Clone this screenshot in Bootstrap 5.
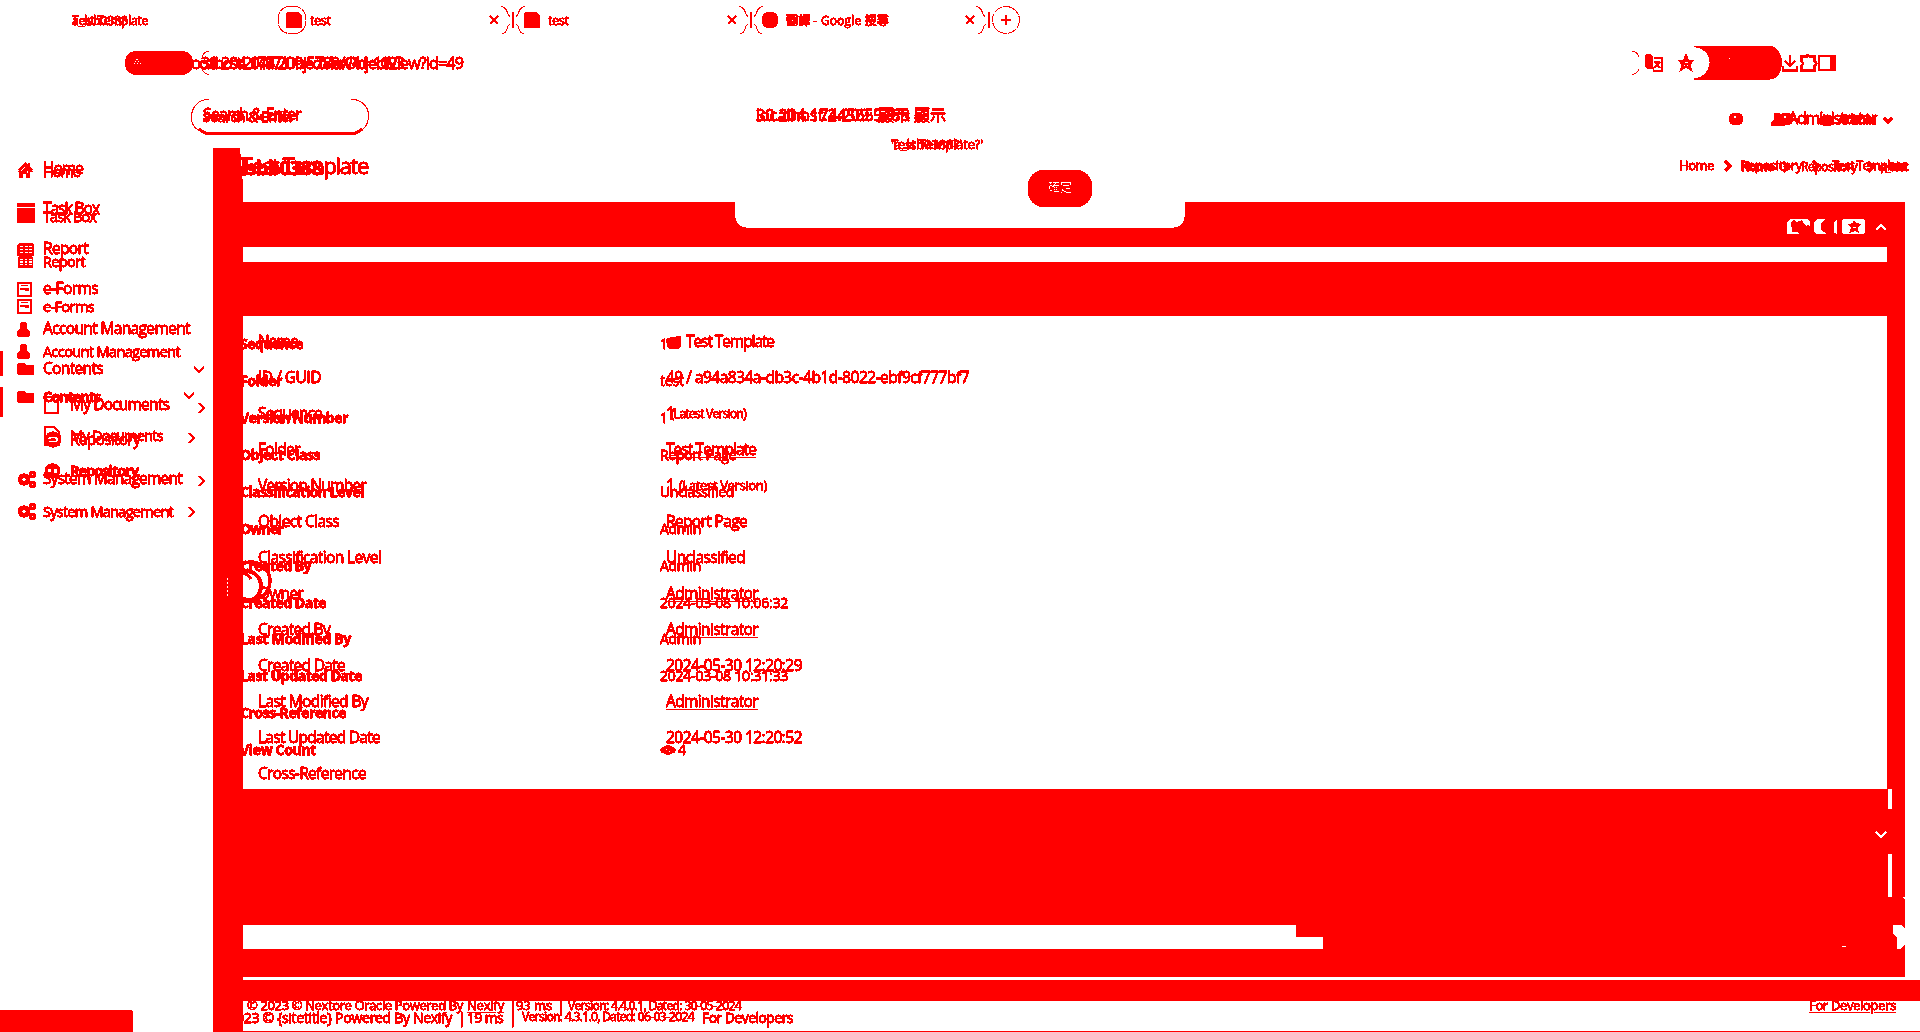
<!DOCTYPE html>
<html lang="zh-Hant">
<head>
<meta charset="utf-8">
<title>Test Template</title>
<link rel="stylesheet" href="https://cdn.jsdelivr.net/npm/bootstrap@5.3.0/dist/css/bootstrap.min.css">
<style>
:root{--ink:#f00}
body{font-family:"Open Sans","Noto Sans CJK TC",sans-serif;color:var(--ink);background:#fff;overflow:hidden}
.screen{width:1920px;height:1032px;filter:url(#crisp);background:#fff;overflow:hidden;-webkit-text-stroke:.3px var(--ink)}
.screen *{white-space:nowrap}
svg{display:block;flex:none;fill:none;stroke:var(--ink);stroke-width:2;shape-rendering:crispEdges}
.solid{fill:var(--ink);stroke:none}
.ink{background:var(--ink)}
.over{position:absolute;left:0;top:0}
.at{position:absolute;line-height:20px}
.tabs-row{height:40px}.url-row{height:48px}.app-row{height:60px}
.t12{font-size:12px}.t13{font-size:13px}.t14{font-size:14px}.t15{font-size:15px}.t16{font-size:16px}
.side{width:213px;height:884px}
.side ul{width:213px}
.lay-a{position:relative;top:1px}
.lay-a li{height:40px;font-size:15.5px}.lay-a li.sub{height:35px;top:-2px}
.lay-b li{height:45px;font-size:14.5px}.lay-b li.sub{height:35px;top:-1px}
.side li{padding-left:17px;position:relative}
.side li.sub{padding-left:44px}
.side .glyph{width:26px}.side .sub .glyph{width:26px}
.side .chev{position:absolute;right:8px}.lay-b .chev{right:18px!important}
.side .cur::before{content:"";position:absolute;left:0;top:2px;width:3px;height:25px;background:var(--ink)}
.lay-b .cur::before{top:13px!important;height:30px!important}
.rail{width:30px;height:884px}
.main-col{width:1677px}
.head{height:54px}
.panel-box{width:1662px}
.rows-a{padding:8px 0 0 15px}.rows-a>div{height:36px;font-size:15.5px}
.rows-a .k{width:408px}
.rows-b{top:9px;left:-3px}.rows-b>div{height:36.95px;font-size:14px}
.rows-b .k{width:420px;font-weight:700}
.sheet{width:1644px;height:473px}
u{text-underline-offset:2px}
</style>
</head>
<body>
<svg width="0" height="0" class="position-absolute"><defs>
<filter id="crisp" x="0" y="0" width="100%" height="100%" color-interpolation-filters="sRGB"><feComponentTransfer><feFuncR type="discrete" tableValues="1 1"/><feFuncG type="discrete" tableValues="0 0 0 0 0 0 0 1"/><feFuncB type="discrete" tableValues="0 0 0 0 0 0 0 1"/></feComponentTransfer></filter>
<symbol id="home" viewBox="0 0 16 16"><path class="solid" d="M8 0L0 8h2v7h4v-4h3v4h4V8h3l-3-3V1h-2v2z"/><path d="M4 7l4-4M11 7v3" stroke="#fff" stroke-width="1"/></symbol>
<symbol id="grid" viewBox="0 0 17 13"><path class="solid" d="M2 0h13l2 2v11H0V2z"/><path d="M3 3.500h12M3 6.500h12M3 9.500h12" stroke="#fff" stroke-width="1.200" stroke-dasharray="3 1.500"/></symbol>
<symbol id="form" viewBox="0 0 15 15"><path d="M1 1h13v13H1zM3 7h9M8 8h4" stroke-width="2.600"/><path d="M4 3.500h7" stroke-width="1"/></symbol>
<symbol id="user" viewBox="0 0 13 15"><path class="solid" d="M6.500 0C3 0 2 3 3 6L0 10v4l2 1h9l2-1v-4l-3-4c1-3 0-6-3.500-6z"/></symbol>
<symbol id="folder" viewBox="0 0 17 12"><path class="solid" d="M1 0h6l2 2h7l1 1v8l-1 1H1l-1-1V1z"/></symbol>
<symbol id="gears" viewBox="0 0 19 17"><circle cx="7" cy="8.500" r="4" stroke-width="4.500"/><path d="M7 2v13M.5 8.500H13M2.500 4l9 9M2.500 13l9-9" stroke-dasharray="2.500 8 2.500 9"/><circle cx="15.500" cy="3.500" r="2" stroke-width="3.500"/><circle cx="15.500" cy="13.500" r="2" stroke-width="3.500"/></symbol>
<symbol id="world" viewBox="0 0 18 17"><circle cx="9" cy="8.500" r="6.500" stroke-width="3.500"/><path d="M1 5h16M2 12h14M9 2v4M9 11v4" stroke-width="1.800"/><circle cx="9" cy="8.500" r="2" class="solid"/></symbol>
<symbol id="down" viewBox="0 0 12 7"><path d="M1 1l5 4.500L11 1" stroke-width="2.200"/></symbol>
<symbol id="next" viewBox="0 0 7 12"><path d="M1 1l4.500 5L1 11" stroke-width="2.200"/></symbol>
<symbol id="bc" viewBox="0 0 8 12"><path d="M1 1l5 5-5 5" stroke-width="3"/></symbol>
</defs></svg>
<div class="screen position-relative">

<header class="tabs-row position-relative">
 <svg class="over" width="1030" height="40" style="stroke-width:1">
  <rect x="278.500" y="6.500" width="27" height="27" rx="11" stroke-dasharray="12 1"/>
  <path d="M501 6.500q5 1 6 5t3 5M510 24q-2 1-3 5t-5 4.500M525 6.500q-5 1-6 5t-3 5M516 24q2 1 3 5t5 4.500M739 6.500q5 1 6 5t3 5M748 24q-2 1-3 5t-5 4.500M763 6.500q-5 1-6 5t-3 5M754 24q2 1 3 5t5 4.500M976 6.500q5 1 6 5t3 5M986 24q-2 1-3 5t-5 4.500"/>
  <path d="M513 12v16M751 12v16M989 12v16" stroke-width="1.500"/>
  <circle cx="1006" cy="20" r="13.500" stroke-dasharray="9 1"/>
  <path d="M1001 20h10M1006 15v10M490 16l8 8m0-8l-8 8M728 16l8 8m0-8l-8 8M966 16l8 8m0-8l-8 8" stroke-width="2.200"/>
  <path class="solid" d="M287 12h11l4 4v12h-16V13zM525 12h11l4 4v12h-16V13z"/><rect class="solid" x="762" y="12" width="16" height="16" rx="6"/>
 </svg>
 <span class="at t12" style="left:72px;top:11px" data-w="76">Test Template</span>
 <span class="at t12" style="left:72px;top:11px" data-w="56">a_lsb0388</span>
 <span class="at t12" style="left:310px;top:11px" data-w="21">test</span>
 <span class="at t12" style="left:548px;top:11px" data-w="21">test</span>
 <span class="at t12" style="left:786px;top:11px" data-w="103">翻譯 - Google 搜尋</span>
</header>

<section class="url-row position-relative">
 <svg class="over" width="1920" height="48">
  <rect class="solid" x="125" y="11" width="68" height="24" rx="11"/>
  <path fill="#fff" stroke="none" d="M136 19h2v1h-2zM135 21h1v1h-1zM138 21h1v1h-1zM134 23h1v1h-1zM137 23h1v1h-1zM140 23h1v1h-1z"/>
  <path d="M209 11.500q-5 0-7 5M202 29q2 5 7 5.500M1632 11.500q5 0 7 5M1639 29q-2 5-7 5.500" stroke-width="1"/>
  <path class="solid" d="M1645 16q0-2 2-2h4l2 3v12h-6l-2-2z"/><path d="M1654 18h8v13h-8l-1-4" stroke-width="1.500"/><path d="M1654 22h6M1655 22l5 6m0-6l-6 6"/>
  <path class="solid" d="M1686 14l2.500 6h5.500l-4 4.500 2 6.500-6-4-6 4 2-6.500-4-4.500h5.500z" style="stroke:var(--ink);stroke-width:1"/><path fill="#fff" stroke="none" d="M1685 22h3v1h-3zM1684 25h1v1h-1zM1687 25h1v1h-1z"/>
  <path class="solid" d="M1694 6h76a12 16.500 0 0 1 12 17 12 16.500 0 0 1-12 16.500h-76v-1c9-1 15-7 15.500-16S1703 8 1694 7z"/><rect x="1729" y="18" width="1" height="1" fill="#fff" stroke="none"/>
  <path d="M1790 15v12M1785 21l5 5 5-5M1783 26v4.500h14V26M1801.500 16.500h5q1-3 3 0h5v5q4 2 0 4v5h-13v-5q3-2 0-4z" stroke-width="2.600"/>
  <path d="M1819 16h16v14h-16zM1831 16v14M1833 16v14" stroke-width="2.800"/>
 </svg>
 <span class="at t16" style="left:189px;top:13px" data-w="214">localhost:20457/ObjectView?id=1023</span>
 <span class="at t16" style="left:201px;top:13px" data-w="262">30.204.174.209:5788/ObjectView?id=49</span>
</section>

<section class="app-row position-relative">
 <svg class="over" width="380" height="50"><path d="M209 11.500h-4q-13 4-13.500 17t13.500 16h150q13-3 13.500-16t-13.500-17h-4" stroke-width="1"/><path d="M199 41q4 4 9 4.500h145q5-.5 9-4.500" stroke-width="3"/></svg>
 <span class="at t16" style="left:203px;top:16px" data-w="98">Search &amp; Enter</span>
 <span class="at t14" style="left:203px;top:19px" data-w="91">Search &amp; Enter</span>
 <span class="at t16" style="left:756px;top:17px" data-w="154">localhost:24565 顯示</span>
 <span class="at t16" style="left:756px;top:17px" data-w="190">30.204.174.209:5788 顯示</span>
 <span class="at t13" style="left:891px;top:46px" data-w="92">Test Template?'</span>
 <span class="at t13" style="left:891px;top:46px" data-w="71">'a_lsb0388?'</span>
 <svg class="over" width="1920" height="60">
  <rect class="solid" x="1729" y="25" width="14" height="12" rx="5"/><rect x="1734" y="28" width="2" height="2" fill="#fff" stroke="none"/>
  <rect class="solid" x="1779" y="25" width="14" height="12" rx="5"/><rect x="1784" y="28" width="2" height="2" fill="#fff" stroke="none"/>
  <path class="solid" d="M1774 25h6l2 6 3 3v4h-14v-4l3-3z"/><rect class="solid" x="1821" y="27" width="12" height="11" rx="4"/>
  <path d="M1884 30l4 4 4-4" stroke-width="3.500"/>
 </svg>
 <span class="at t16" style="left:1788px;top:20px" data-w="88">Administrator</span>
 <span class="at t13 fw-bold" style="left:1838px;top:21px" data-w="38">Admin</span>
</section>

<div class="d-flex position-relative">
 <nav class="side position-relative">
  <ul class="list-unstyled m-0 lay-a">
   <li class="d-flex align-items-center"><span class="glyph"><svg width="16" height="15"><use href="#home"/></svg></span><span data-w="40">Home</span></li>
   <li class="d-flex align-items-center"><span class="glyph"><svg width="18" height="12"><path class="solid" d="M0 0h18v4H0zM0 5h18v3H0zM0 9h18v3H0z"/></svg></span><span data-w="56">Task Box</span></li>
   <li class="d-flex align-items-center"><span class="glyph"><svg width="17" height="13"><use href="#grid"/></svg></span><span data-w="45">Report</span></li>
   <li class="d-flex align-items-center"><span class="glyph"><svg width="15" height="15"><use href="#form"/></svg></span><span data-w="55">e-Forms</span></li>
   <li class="d-flex align-items-center"><span class="glyph"><svg width="13" height="15"><use href="#user"/></svg></span><span data-w="147">Account Management</span></li>
   <li class="d-flex align-items-center cur"><span class="glyph"><svg width="17" height="12"><use href="#folder"/></svg></span><span data-w="60">Contents</span><svg class="chev" width="12" height="7"><use href="#down"/></svg></li>
   <li class="d-flex align-items-center sub"><span class="glyph"><svg width="15" height="18"><path d="M1 1h13v16H1z"/></svg></span><span data-w="99">My Documents</span><svg class="chev" width="7" height="12" style="top:15px"><use href="#next"/></svg></li>
   <li class="d-flex align-items-center sub"><span class="glyph"><svg width="18" height="17"><use href="#world"/></svg></span><span data-w="70">Repository</span></li>
   <li class="d-flex align-items-center"><span class="glyph"><svg width="19" height="17"><use href="#gears"/></svg></span><span data-w="139">System Management</span><svg class="chev" width="7" height="12" style="top:16px"><use href="#next"/></svg></li>
  </ul>
  <ul class="list-unstyled m-0 over lay-b" style="top:1px">
   <li class="d-flex align-items-center"><span class="glyph"><svg width="16" height="15"><use href="#home"/></svg></span><span data-w="37">Home</span></li>
   <li class="d-flex align-items-center"><span class="glyph"><svg width="18" height="12"><path class="solid" d="M0 0h18v12H0z"/></svg></span><span data-w="53">Task Box</span></li>
   <li class="d-flex align-items-center"><span class="glyph"><svg width="17" height="12"><use href="#grid"/></svg></span><span data-w="42">Report</span></li>
   <li class="d-flex align-items-center"><span class="glyph"><svg width="15" height="15"><use href="#form"/></svg></span><span data-w="51">e-Forms</span></li>
   <li class="d-flex align-items-center"><span class="glyph"><svg width="13" height="15"><use href="#user"/></svg></span><span data-w="137">Account Management</span></li>
   <li class="d-flex align-items-center cur"><span class="glyph"><svg width="17" height="12"><use href="#folder"/></svg></span><span class="fw-bold" data-w="57">Contents</span><svg class="chev" width="12" height="7" style="top:18px"><use href="#down"/></svg></li>
   <li class="d-flex align-items-center sub"><span class="glyph"><svg width="16" height="20"><path d="M1 1h9l5 5v13H1zM4 10h8M4 14h8" stroke-width="2.500"/></svg></span><span data-w="93">My Documents</span><svg class="chev" width="7" height="12" style="top:14px"><use href="#next"/></svg></li>
   <li class="d-flex align-items-center sub"><span class="glyph"><svg width="17" height="16"><use href="#world"/></svg></span><span class="fw-bold" data-w="68">Repository</span></li>
   <li class="d-flex align-items-center"><span class="glyph"><svg width="19" height="17"><use href="#gears"/></svg></span><span data-w="130">System Management</span><svg class="chev" width="7" height="12"><use href="#next"/></svg></li>
  </ul>
 </nav>
 <div class="rail position-relative"><svg width="30" height="884"><path class="solid" d="M0 0h27l1 12 2 25v847H0z"/></svg></div>

 <main class="main-col position-relative">
  <div class="head position-relative">
   <span class="at" style="left:-2px;top:7px;font-size:22px" data-w="127">Test Template</span>
   <span class="at fw-bold" style="left:-2px;top:10px;font-size:20px" data-w="81">lsbb0388</span>
   <nav class="over d-flex align-items-center t13" style="left:1436px;top:8px;height:20px"><span data-w="35">Home</span><svg width="8" height="12" style="margin:0 8px 0 10px"><use href="#bc"/></svg><span data-w="62">Repository</span><svg width="8" height="12" style="margin:0 12px 0 10px"><use href="#bc"/></svg><span data-w="74">Test Template</span></nav>
   <nav class="over d-flex align-items-center t12" style="left:1498px;top:9px;height:20px"><b data-w="32">Home</b><svg width="8" height="12" style="margin:0 11px 0 9px"><use href="#bc"/></svg><span data-w="56">Repository</span><svg width="8" height="12" style="margin:0 5px 0 10px"><use href="#bc"/></svg><b data-w="27">a_test</b></nav>
  </div>
  <section class="panel-box ink">
   <div class="d-flex justify-content-end align-items-center gap-1" style="height:45px;padding:4px 18px 0 0">
    <svg width="23" height="15"><path fill="#fff" stroke="none" d="M3 0h17l3 3v12H0V3z"/><path class="solid" d="M4 3l3-2 3 2 5-2 2 4 2 2 2-1 2 1v8H12l-2-2H5z"/></svg>
    <svg width="24" height="15"><path fill="#fff" stroke="none" d="M3 0h8L7 4v7l5 3v1H2l-2-2V3zM20 3l3-3v15l-3-1z"/></svg>
    <svg width="23" height="15"><rect width="23" height="15" rx="3" fill="#fff" stroke="none"/><path class="solid" d="M12 1l2 3 5 1-3 4 1 5-4-2-6 2 2-5-3-4 5-1z"/><path d="M11 8.500h3" stroke="#fff" stroke-width="1"/></svg>
    <svg width="12" height="8" style="margin-left:6px"><path d="M1 7l5-5 5 5" stroke="#fff"/></svg>
   </div>
   <div class="bg-white" style="height:15px;width:1644px"></div>
   <div style="height:54px"></div>
   <div class="sheet bg-white position-relative">
    <div class="rows-a">
     <div class="d-flex align-items-center"><span class="k"><span data-w="40">Name</span></span><svg width="16" height="13" class="me-1"><path class="solid" d="M0 3l5-2 9-1 1 1v9l-3 3H3l-2-3z"/></svg><span data-w="88">Test Template</span></div>
     <div class="d-flex align-items-center"><span class="k"><span data-w="63">ID / GUID</span></span><span data-w="303">49 / a94a834a-db3c-4b1d-8022-ebf9cf777bf7</span></div>
     <div class="d-flex align-items-center"><span class="k"><span data-w="64">Sequence</span></span><span>1</span></div>
     <div class="d-flex align-items-center"><span class="k"><span data-w="42">Folder</span></span><u data-w="90">Test Template</u></div>
     <div class="d-flex align-items-center"><span class="k"><span data-w="108">Version Number</span></span><span>1&nbsp;</span><span class="t13" data-w="88">(Latest Version)</span></div>
     <div class="d-flex align-items-center"><span class="k"><span data-w="81">Object Class</span></span><span data-w="81">Report Page</span></div>
     <div class="d-flex align-items-center"><span class="k"><span data-w="123">Classification Level</span></span><span data-w="79">Unclassified</span></div>
     <div class="d-flex align-items-center"><span class="k"><span data-w="45">Owner</span></span><u data-w="92">Administrator</u></div>
     <div class="d-flex align-items-center"><span class="k"><span data-w="72">Created By</span></span><u data-w="92">Administrator</u></div>
     <div class="d-flex align-items-center"><span class="k"><span data-w="87">Created Date</span></span><span data-w="136">2024-05-30 12:20:29</span></div>
     <div class="d-flex align-items-center"><span class="k"><span data-w="110">Last Modified By</span></span><u data-w="92">Administrator</u></div>
     <div class="d-flex align-items-center"><span class="k"><span data-w="122">Last Updated Date</span></span><span data-w="136">2024-05-30 12:20:52</span></div>
     <div class="d-flex align-items-center"><span class="k"><span data-w="108">Cross-Reference</span></span></div>
    </div>
    <div class="rows-b position-absolute">
     <div class="d-flex align-items-center"><span class="k"><span data-w="63">Sequence</span></span><span>1</span></div>
     <div class="d-flex align-items-center"><span class="k"><span data-w="42">Folder</span></span><span data-w="24">test</span></div>
     <div class="d-flex align-items-center"><span class="k"><span data-w="108">Version Number</span></span><span>1</span><span class="t12" style="margin:-6px 0 0 3px" data-w="75">(Latest Version)</span></div>
     <div class="d-flex align-items-center"><span class="k"><span data-w="80">Object Class</span></span><span data-w="76">Report Page</span></div>
     <div class="d-flex align-items-center"><span class="k"><span data-w="124">Classification Level</span></span><span data-w="74">Unclassified</span></div>
     <div class="d-flex align-items-center"><span class="k"><span data-w="43">Owner</span></span><span data-w="41">Admin</span></div>
     <div class="d-flex align-items-center"><span class="k"><span data-w="71">Created By</span></span><span data-w="41">Admin</span></div>
     <div class="d-flex align-items-center"><span class="k"><span data-w="86">Created Date</span></span><span data-w="128">2024-03-08 10:06:32</span></div>
     <div class="d-flex align-items-center"><span class="k"><span data-w="111">Last Modified By</span></span><span data-w="41">Admin</span></div>
     <div class="d-flex align-items-center"><span class="k"><span data-w="122">Last Updated Date</span></span><span data-w="128">2024-03-08 10:31:33</span></div>
     <div class="d-flex align-items-center"><span class="k"><span data-w="106">Cross-Reference</span></span></div>
     <div class="d-flex align-items-center"><span class="k"><span data-w="76">View Count</span></span><svg width="16" height="10"><path class="solid" d="M0 5q8-10 16 0-8 10-16 0z"/><path d="M1 5h14" stroke-width="5"/><path d="M6 4.500h1M9 6.500h1" stroke="#fff" stroke-width="1"/></svg><span style="margin-left:2px">4</span></div>
    </div>
   </div>
   <div class="position-relative" style="height:136px">
    <svg class="over" width="1677" height="136"><path fill="#fff" stroke="none" d="M1645 0h4v20h-4zM1645 65h4v43h-4zM1660 108h2v3z"/><path d="M1633 43l5 5 5-5" stroke="#fff"/></svg>
   </div>
   <div class="bg-white" style="height:12px;width:1053px"></div>
   <div class="bg-white position-relative" style="height:12px;width:1080px"><svg class="over" width="1677" height="24" style="top:-12px"><path fill="#fff" stroke="none" d="M1650 0h8l4 4v15l-4 5h-4V13l-4-4zM1599 21h4v1h-4z"/></svg></div>
   <div style="height:28px"></div>
   <div class="bg-white" style="height:3px"></div>
  </section>
  <div class="ink" style="height:21px"></div>
  <footer class="position-relative" style="height:31px;border-bottom:1px solid #f00">
   <div class="over d-flex align-items-center t13" style="left:4px;top:-5px;height:20px"><span data-w="216">© 2023 © Nextore Oracle Powered By</span><u style="margin-left:4px" data-w="37">Nexify</u><span style="margin:0 0 0 5px;width:7px">|</span><span data-w="36">93 ms</span><span style="margin:0 5px;width:6px">|</span><span class="t12" data-w="173">Version: 4.4.0.1, Dated: 30-05-2024</span></div>
   <div class="over d-flex align-items-center t14" style="left:-7px;top:6px;height:20px"><span data-w="216">023 © {sitetitle} Powered By Nexify</span><span style="margin-left:6px;width:9px">|</span><span data-w="36">19 ms</span><span style="margin-left:6px;width:13px">|</span><span class="t12" data-w="172">Version: 4.3.1.0, Dated: 06-03-2024</span><span class="ms-2" data-w="91">For Developers</span></div>
   <u class="at t13" style="left:1566px;top:-6px" data-w="87">For Developers</u>
  </footer>
 </main>
</div>

<div class="at bg-white" style="left:735px;top:190px;width:450px;height:38px;border-radius:0 0 12px 12px"></div>
<div class="at ink text-white text-center" style="left:1028px;top:170px;width:64px;height:37px;line-height:36px;border-radius:16px;font-size:12px;font-weight:500;-webkit-text-stroke:0">確定</div>
<svg class="over" width="60" height="60" style="left:222px;top:555px"><circle cx="29" cy="26" r="19" stroke-width="3.500"/><circle cx="24" cy="31" r="15" stroke-width="4"/><path d="M19 19q5-2 10 5M14 30l-2 6" stroke-width="3"/><path d="M5.500 23v18" stroke="#fff" stroke-width="1" stroke-dasharray="2 2"/></svg>
<div class="at ink" style="left:0;top:1010px;width:133px;height:22px;border-top-right-radius:3px"></div>
</div>
<script src="https://cdn.jsdelivr.net/npm/bootstrap@5.3.0/dist/js/bootstrap.bundle.min.js"></script>
<script>
// Track each label so that it fills the width given in data-w
document.querySelectorAll('[data-w]').forEach(function(e){
  var r=document.createRange();r.selectNodeContents(e);
  var gap=e.dataset.w-r.getBoundingClientRect().width;
  e.style.letterSpacing=(gap/e.textContent.length).toFixed(3)+'px';
});
</script>
</body>
</html>
